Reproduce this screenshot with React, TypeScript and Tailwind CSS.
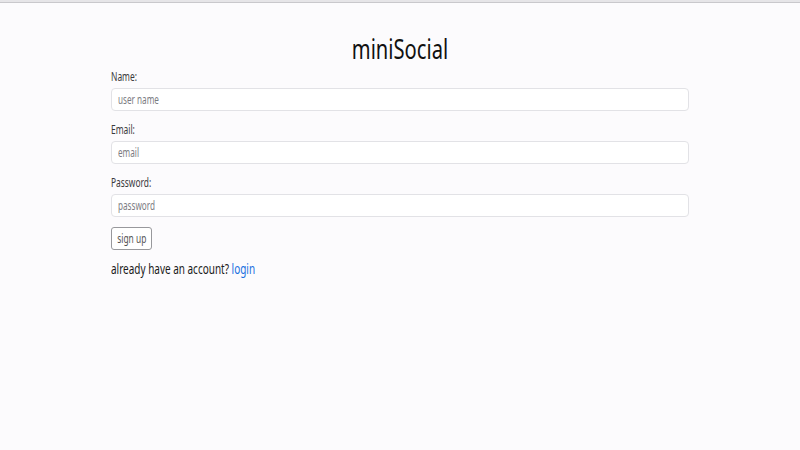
import React from "react";

const Field = ({ label, placeholder, type = "text" }: { label: string; placeholder: string; type?: string }) => (
  <div className="flex flex-col">
    <label className="h-[13px] text-[12px] leading-[13px] text-[#3a3a3c] scale-x-[0.7] origin-left mb-[5px] whitespace-nowrap">{label}</label>
    <div className="h-[23px] rounded-[4px] border border-[#e2e2e6] bg-white flex items-center px-[6px]">
      <input
        type={type}
        placeholder={placeholder}
        className="w-full bg-transparent outline-none text-[12px] text-[#333] placeholder:text-[#7c7c82] scale-x-[0.68] origin-left"
      />
    </div>
  </div>
);

export default function App() {
  return (
    <div className="w-[800px] h-[450px] bg-[#fcfbfd] font-['Noto_Sans',sans-serif] flex flex-col">
      <div className="h-[3px] bg-[#e6e5e8] border-b border-[#c9c8cc]" />
      <div className="w-[578px] mx-auto flex flex-col">
        <h1 className="mt-[29px] h-[32px] text-center text-[28px] leading-[32px] text-[#111] scale-x-[0.72]">miniSocial</h1>
        <div className="mt-[6px] flex flex-col gap-[12px]">
          <Field label="Name:" placeholder="user name" />
          <Field label="Email:" placeholder="email" />
          <Field label="Password:" placeholder="password" type="password" />
        </div>
        <div className="mt-[10px]">
          <button className="w-[41px] h-[23px] rounded-[3px] border border-[#98989c] text-[12px] text-[#555] bg-white flex items-center justify-center whitespace-nowrap">
            <span className="scale-x-[0.7]">sign up</span>
          </button>
        </div>
        <p className="mt-[8px] text-[15px] leading-[20px] text-[#1a1a1a] scale-x-[0.665] origin-left whitespace-nowrap">
          already have an account? <a className="text-[#1a6fe0]">login</a>
        </p>
      </div>
    </div>
  );
}
